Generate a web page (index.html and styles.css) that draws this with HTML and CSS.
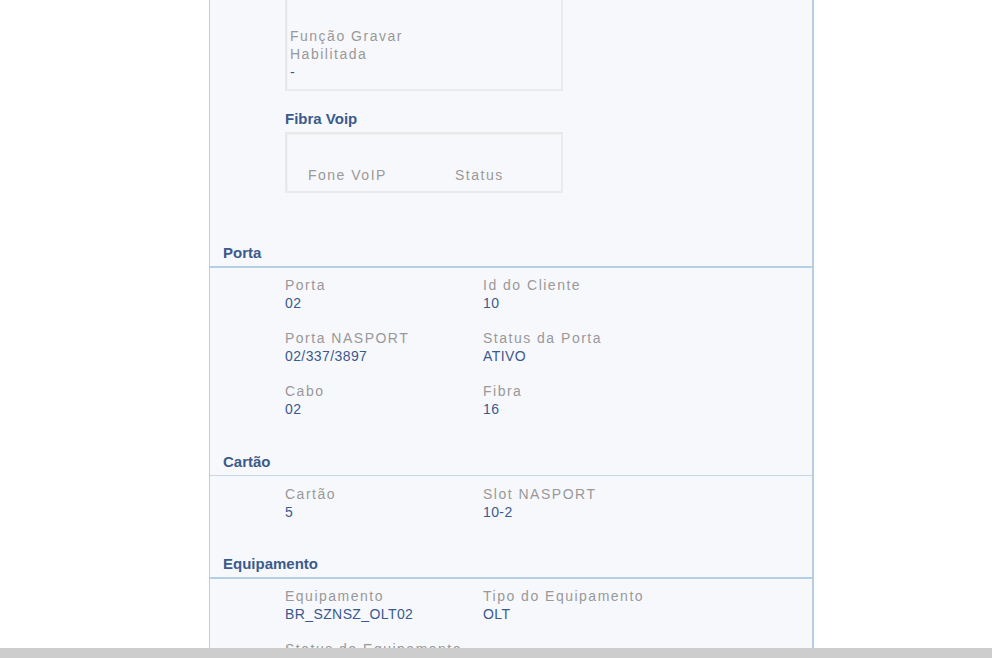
FILE: index.html
```html
<!DOCTYPE html>
<html lang="pt-BR">
<head>
    <meta charset="UTF-8">
    <title>Detalhes do Cliente</title>
    <link rel="stylesheet" href="styles.css">
</head>
<body>
    <div class="viewport">
        <div class="panel">
            <div class="sub">
                <div class="box box-top">
                    <div class="field">
                        <div class="label">Função Gravar<br>Habilitada</div>
                        <div class="value">-</div>
                    </div>
                </div>

                <h3 class="sub-title">Fibra Voip</h3>
                <div class="box box-voip">
                    <div class="thead">
                        <span class="th th-fone">Fone VoIP</span>
                        <span class="th">Status</span>
                    </div>
                </div>
            </div>

            <div class="section section-porta">
                <h2 class="section-title">Porta</h2>
                <div class="grid">
                    <div class="field">
                        <div class="label">Porta</div>
                        <div class="value">02</div>
                    </div>
                    <div class="field">
                        <div class="label">Id do Cliente</div>
                        <div class="value">10</div>
                    </div>
                    <div class="field">
                        <div class="label">Porta NASPORT</div>
                        <div class="value">02/337/3897</div>
                    </div>
                    <div class="field">
                        <div class="label">Status da Porta</div>
                        <div class="value">ATIVO</div>
                    </div>
                    <div class="field">
                        <div class="label">Cabo</div>
                        <div class="value">02</div>
                    </div>
                    <div class="field">
                        <div class="label">Fibra</div>
                        <div class="value">16</div>
                    </div>
                </div>
            </div>

            <div class="section section-cartao">
                <h2 class="section-title thin">Cartão</h2>
                <div class="grid">
                    <div class="field">
                        <div class="label">Cartão</div>
                        <div class="value">5</div>
                    </div>
                    <div class="field">
                        <div class="label">Slot NASPORT</div>
                        <div class="value">10-2</div>
                    </div>
                </div>
            </div>

            <div class="section">
                <h2 class="section-title">Equipamento</h2>
                <div class="grid">
                    <div class="field">
                        <div class="label">Equipamento</div>
                        <div class="value">BR_SZNSZ_OLT02</div>
                    </div>
                    <div class="field">
                        <div class="label">Tipo do Equipamento</div>
                        <div class="value">OLT</div>
                    </div>
                    <div class="field">
                        <div class="label">Status do Equipamento</div>
                        <div class="value">ATIVO</div>
                    </div>
                </div>
            </div>
        </div>
    </div>
    <div class="hbar"></div>
</body>
</html>
```

FILE: styles.css
```css
html, body{
    margin:0;
    padding:0;
    background-color:#fff;
    overflow:hidden;
}

body{
    font-family:'Liberation Sans', Arial, sans-serif;
    font-size:14px;
}

.viewport{
    height:648px;
    overflow:hidden;
}

.panel{
    width:602px;
    margin:-30px 0 0 209px;
    background-color:#f7f8fc;
    border-left:1px solid #b4cfe6;
    border-right:2px solid #b4cfe6;
    padding-bottom:200px;
}

/* sub blocks inside the upper section */
.sub{
    padding-left:75px;
}

.box{
    width:271px;
    border:2px solid #ebebeb;
    border-top-color:#e8e8e8;
    border-left-color:#e8e8e8;
    box-shadow:inset 1px 1px 0 #f1f1f1;
}

.box-top{
    padding:55px 0 8px 3px;
}

.sub-title{
    margin:19px 0 4px;
    font-size:15px;
    line-height:18px;
    color:#3b5b8c;
}

.box-voip{
    padding:32px 0 7px 21px;
    width:253px;
}

.thead{
    display:flex;
    line-height:18px;
}

.th{
    color:#999;
    letter-spacing:1.5px;
}

.th-fone{
    width:147px;
}

/* sections */
.section-title{
    margin:0;
    padding:1px 0 4px 13px;
    font-size:15px;
    line-height:18px;
    color:#3b5b8c;
    border-bottom:2px solid #b4cfe6;
}

.section-title.thin{
    border-bottom:1px solid #c4d8ea;
    margin-bottom:1px;
}

.section-porta{
    margin-top:50px;
}

.section-cartao{
    margin-top:34px;
}

.section-cartao + .section{
    margin-top:33px;
}

.grid{
    display:grid;
    grid-template-columns:198px 198px;
    row-gap:17px;
    padding:8px 0 0 75px;
}

.label{
    color:#999;
    letter-spacing:1.5px;
    line-height:18px;
}

.value{
    color:#3a5a8f;
    letter-spacing:0.4px;
    line-height:18px;
}

.hbar{
    height:10px;
    background-color:#cdcdcd;
}
```
